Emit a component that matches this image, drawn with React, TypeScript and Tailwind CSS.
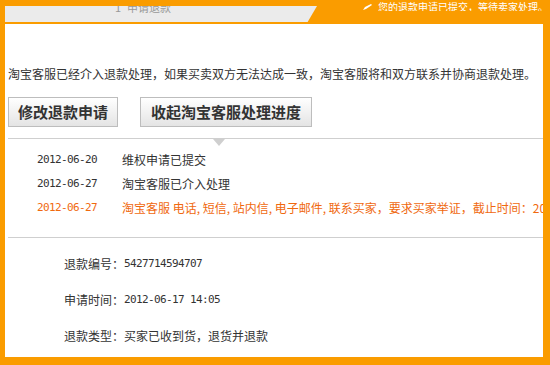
import React from "react";

const cjk = "font-['Noto_Sans_CJK_SC','Noto_Sans',sans-serif]";
const mono = "font-['DejaVu_Sans_Mono','Liberation_Mono',monospace] text-[11px] tracking-[-0.62px]";

const timeline = [
	{ date: "2012-06-20", text: "维权申请已提交", hot: false },
	{ date: "2012-06-27", text: "淘宝客服已介入处理", hot: false },
	{
		date: "2012-06-27",
		text: "淘宝客服  电话, 短信, 站内信, 电子邮件, 联系买家，要求买家举证，截止时间：2012-06-30 14:05:00",
		hot: true,
	},
];

export default function App() {
	return (
		<div className={`w-[550px] h-[365px] bg-[#fa9c00] flex flex-col overflow-hidden ${cjk}`}>
			{/* top bar, cut off by the screenshot */}
			<div className="h-[24px] flex items-start shrink-0">
				<div className="ml-[5px] mt-[6px] w-[312px] h-[16px] bg-[#ebebeb] overflow-hidden [clip-path:polygon(0_0,100%_0,97%_100%,0_100%)]">
					<div className="-mt-[6px] pl-[110px] text-[11px] leading-[14px] text-[#999] whitespace-nowrap">
						<span className="mr-[6px]">1</span>申请退款
					</div>
				</div>
				<div className="ml-[46px] w-[180px] h-[11px] overflow-hidden flex items-end gap-[6px] text-white">
					<svg width="9" height="6" viewBox="0 0 9 6" className="mb-[1px] shrink-0">
						<path d="M0 6 L2 3 L8 0 L9 1 L3 5 Z" fill="#fff" />
					</svg>
					<div className="text-[10px] leading-[12px] whitespace-nowrap -mb-[2px]">
						您的退款申请已提交，等待卖家处理。
					</div>
				</div>
			</div>

			{/* white panel */}
			<div className="ml-[5px] mr-[7px] mb-[8px] h-[333px] bg-white overflow-hidden">
				<p className="mt-[43px] pl-[3px] text-[12px] leading-[14px] text-[#333] whitespace-nowrap">
					淘宝客服已经介入退款处理，如果买卖双方无法达成一致，淘宝客服将和双方联系并协商退款处理。
				</p>

				<div className="mt-[16px] pl-[3px] flex gap-[22px]">
					<button className="w-[110px] h-[30px] border border-[#bdbdbd] bg-gradient-to-b from-white to-[#e4e4e4] text-[15px] font-bold text-[#333]">
						修改退款申请
					</button>
					<button className="w-[172px] h-[30px] border border-[#bdbdbd] bg-gradient-to-b from-white to-[#e4e4e4] text-[15px] font-bold text-[#333]">
						收起淘宝客服处理进度
					</button>
				</div>

				<div className="mt-[11px] ml-[3px] h-px bg-[#cfcfcf]" />
				<div className="ml-[208px] w-0 h-0 border-x-[6px] border-x-transparent border-t-[7px] border-t-[#cfcfcf]" />

				<div className="mt-[2px] pl-[32px] flex flex-col">
					{timeline.map((row, i) => (
						<div
							key={i}
							className={`h-[24px] flex items-center whitespace-nowrap ${row.hot ? "text-[#f0690f]" : "text-[#333]"}`}
						>
							<span className={`w-[85px] shrink-0 ${mono}`}>{row.date}</span>
							<span className="text-[12px]">{row.text}</span>
						</div>
					))}
				</div>

				<div className="mt-[17px] ml-[3px] h-px bg-[#cfcfcf]" />

				<div className="mt-[8px] pl-[59px] flex flex-col text-[12px] text-[#333]">
					<div className="h-[36px] flex items-center">
						退款编号：<span className={mono}>5427714594707</span>
					</div>
					<div className="h-[36px] flex items-center">
						申请时间：<span className={mono}>2012-06-17 14:05</span>
					</div>
					<div className="h-[36px] flex items-center">退款类型：买家已收到货，退货并退款</div>
				</div>
			</div>
		</div>
	);
}
